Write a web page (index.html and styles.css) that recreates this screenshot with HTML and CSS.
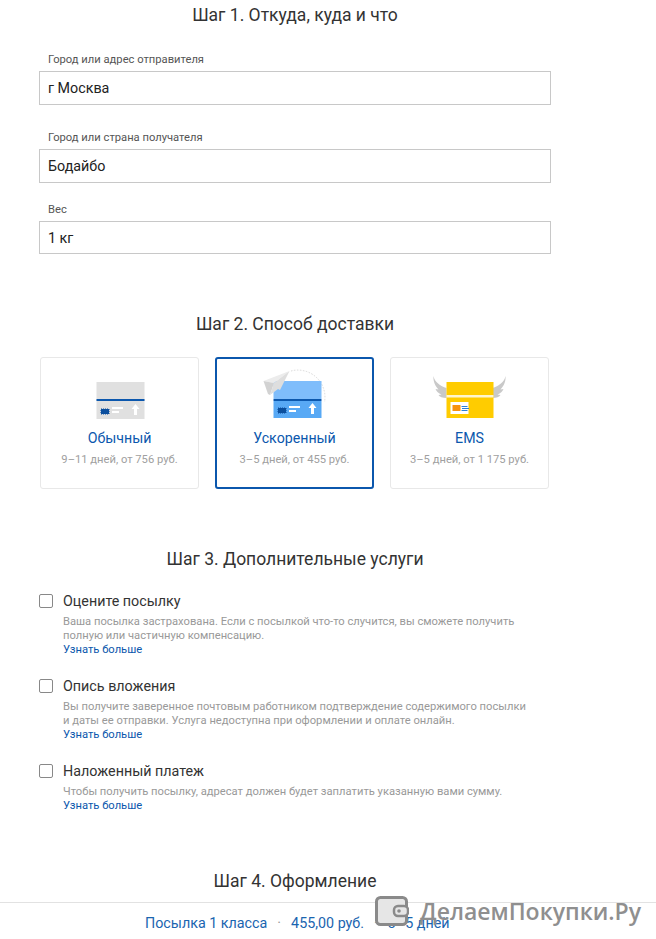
FILE: index.html
```html
<!DOCTYPE html>
<html lang="ru">
  <head>
    <meta charset="UTF-8" />
    <title>Шаг 1. Откуда, куда и что</title>
    <link rel="stylesheet" href="styles.css">
  </head>
  <body>
    <div class="page">
      <div class="content">
        <h2 class="step step-1">Шаг 1. Откуда, куда и что</h2>
        <label class="field field-from">
          <span class="field-label">Город или адрес отправителя</span>
          <span class="input">г Москва</span>
        </label>
        <label class="field field-to">
          <span class="field-label">Город или страна получателя</span>
          <span class="input">Бодайбо</span>
        </label>
        <label class="field field-weight">
          <span class="field-label">Вес</span>
          <span class="input">1 кг</span>
        </label>

        <h2 class="step step-2">Шаг 2. Способ доставки</h2>
        <div class="cards">
          <div class="card">
            <svg class="card-icon" width="80" height="50" viewBox="0 0 80 50">
              <rect x="16.500" y="12" width="48" height="37" fill="#e0e0e0" />
              <rect x="16.500" y="29" width="48" height="2" fill="#0b57ad" />
              <rect x="21" y="39" width="8" height="5" fill="#0b4f9e" stroke="#0b4f9e" stroke-dasharray="1 1" />
              <rect x="32" y="37" width="11" height="2" fill="#fff" />
              <rect x="32" y="41" width="7" height="2" fill="#fff" />
              <path d="M55.500 34l4 5h-2.500v6h-3v-6h-2.500z" fill="#fff" />
            </svg>
            <div class="card-name">Обычный</div>
            <div class="card-note">9–11 дней, от 756 руб.</div>
          </div>
          <div class="card card-active">
            <svg class="card-icon" width="80" height="50" viewBox="0 0 80 50">
              <path d="M36 1A27 27 0 0 1 69.500 32" fill="none" stroke="#d8d8d8" stroke-dasharray="1.500 1.500" />
              <rect x="18.500" y="11" width="48" height="18" fill="#7fbdfb" />
              <rect x="18.500" y="29" width="48" height="2" fill="#0b57ad" />
              <rect x="18.500" y="31" width="48" height="17" fill="#58a9f5" />
              <rect x="23" y="38" width="8" height="5" fill="#0b4f9e" stroke="#0b4f9e" stroke-dasharray="1 1" />
              <rect x="34" y="36" width="11" height="2" fill="#fff" />
              <rect x="34" y="40" width="7" height="2" fill="#fff" />
              <path d="M57.500 33l4 5H59v6h-3v-6h-2.500z" fill="#fff" />
              <path d="M8.500 11L34.500 1 19 13z" fill="#ececec" />
              <path d="M8.500 11L19 13 15 25 13 24z" fill="#d2d2d2" />
              <path d="M34.500 1L19 13l-4 12 8-6 2 1z" fill="#dedede" />
            </svg>
            <div class="card-name">Ускоренный</div>
            <div class="card-note">3–5 дней, от 455 руб.</div>
          </div>
          <div class="card">
            <svg class="card-icon" width="80" height="50" viewBox="0 0 80 50">
              <path d="M3.500 6c1 6 7 10 13 12v10c-4 0-7-1-8-3l3-.5c-3-1-5-3-6-5.500l3 .5C5 16 3 11 3.500 6z" fill="#c9c9c9" />
              <path d="M75.500 6c-1 6-7 10-13 12v10c4 0 7-1 8-3l-3-.5c3-1 5-3 6-5.500l-3 .5C74 16 76 11 75.500 6z" fill="#c9c9c9" />
              <rect x="16.500" y="12" width="47" height="36" fill="#ffcc00" />
              <rect x="16.500" y="25" width="47" height="2.500" fill="#fff6cf" />
              <rect x="20.500" y="32" width="18" height="12" fill="#fff" />
              <rect x="22.500" y="35" width="8" height="6" fill="#f7930f" />
              <path d="M31.500 36.500h6M32 38.500h7M31.500 40.500h6" fill="none" stroke="#2a7fd6" />
            </svg>
            <div class="card-name">EMS</div>
            <div class="card-note">3–5 дней, от 1 175 руб.</div>
          </div>
        </div>

        <h2 class="step step-3">Шаг 3. Дополнительные услуги</h2>
        <div class="option">
          <span class="checkbox"></span>
          <div class="option-body">
            <div class="option-name">Оцените посылку</div>
            <div class="option-text">Ваша посылка застрахована. Если с посылкой что-то случится, вы сможете получить<br />полную или частичную компенсацию.</div>
            <a class="more">Узнать больше</a>
          </div>
        </div>
        <div class="option">
          <span class="checkbox"></span>
          <div class="option-body">
            <div class="option-name">Опись вложения</div>
            <div class="option-text">Вы получите заверенное почтовым работником подтверждение содержимого посылки<br />и даты ее отправки. Услуга недоступна при оформлении и оплате онлайн.</div>
            <a class="more">Узнать больше</a>
          </div>
        </div>
        <div class="option">
          <span class="checkbox"></span>
          <div class="option-body">
            <div class="option-name">Наложенный платеж</div>
            <div class="option-text">Чтобы получить посылку, адресат должен будет заплатить указанную вами сумму.</div>
            <a class="more">Узнать больше</a>
          </div>
        </div>

        <h2 class="step step-4">Шаг 4. Оформление</h2>
      </div>

      <div class="summary">
        <span>Посылка 1 класса</span>
        <span class="dot">·</span>
        <span>455,00 руб.</span>
        <span class="dot">·</span>
        <span>3–5 дней</span>
      </div>

      <div class="watermark">
        <svg width="34" height="30" viewBox="0 0 34 30">
          <rect x="1.500" y="1.500" width="30" height="27" rx="4" fill="#e6e6e6" stroke="#8a8a8a" stroke-width="3" />
          <rect x="19" y="10" width="14" height="10" rx="4" fill="#e6e6e6" stroke="#8a8a8a" stroke-width="2.500" />
          <circle cx="24" cy="15" r="1.800" fill="#8a8a8a" />
        </svg>
        <span class="watermark-text">ДелаемПокупки.Ру</span>
      </div>
    </div>
  </body>
</html>
```

FILE: styles.css
```css
* {
  box-sizing: border-box;
}

body {
  margin: 0;
  background: #fff;
  font-family: Roboto, "Liberation Sans", sans-serif;
  color: #333;
}

.page {
  position: relative;
  height: 939px;
  overflow: hidden;
}

.content {
  width: 512px;
  margin-left: 39px;
}

.step {
  margin: 0;
  font-size: 17.500px;
  font-weight: 400;
  line-height: 24px;
  text-align: center;
  color: #333;
}

.step-1 {
  padding-top: 3px;
}

.step-2 {
  margin-top: 58px;
}

.step-3 {
  margin-top: 58px;
}

.step-4 {
  margin-top: 56px;
}

.field {
  display: block;
}

.field-from {
  margin-top: 26px;
}

.field-to {
  margin-top: 26px;
}

.field-weight {
  margin-top: 20px;
}

.field-label {
  display: block;
  padding-left: 9px;
  font-size: 11.200px;
  line-height: 14px;
  margin-bottom: 4px;
  color: #555;
}

.input {
  display: block;
  height: 34px;
  padding-left: 8px;
  border: 1px solid #c8c8c8;
  font-size: 14.300px;
  line-height: 32px;
  color: #222;
}

.field-weight .input {
  height: 33px;
}

.cards {
  display: flex;
  gap: 16px;
  margin: 21px 0 0 1px;
}

.card {
  width: 159px;
  height: 132px;
  padding-top: 12px;
  border: 1px solid #e8e8e8;
  border-radius: 3px;
  text-align: center;
}

.card-active {
  padding-top: 11px;
  border: 2px solid #0b57ad;
}

.card-icon {
  display: block;
  margin: 0 auto;
  overflow: visible;
}

.card-name {
  margin-top: 9px;
  font-size: 14.200px;
  line-height: 18px;
  color: #0b57ad;
}

.card-note {
  margin-top: 6px;
  font-size: 11.200px;
  line-height: 14px;
  color: #a0a0a0;
}

.option {
  display: flex;
  margin-top: 20px;
}

.step-3 + .option {
  margin-top: 21px;
}

.checkbox {
  flex: none;
  width: 14px;
  height: 14px;
  margin: 2px 10px 0 0;
  border: 1px solid #888;
  border-radius: 2px;
}

.option-name {
  font-size: 14.300px;
  line-height: 18px;
  color: #333;
}

.option-text {
  margin-top: 5px;
  font-size: 11.200px;
  line-height: 14px;
  color: #999;
}

.more {
  display: block;
  font-size: 11.200px;
  line-height: 14px;
  color: #0b57ad;
}

.summary {
  position: absolute;
  left: 0;
  right: 0;
  top: 902px;
  height: 37px;
  padding: 12px 0 0 145px;
  border-top: 1px solid #e2e2e2;
  font-size: 14.300px;
  line-height: 17px;
  color: #1a65b0;
  display: flex;
  gap: 10px;
}

.dot {
  color: #999;
}

.watermark {
  position: absolute;
  left: 375px;
  top: 896px;
  display: flex;
  align-items: center;
  gap: 11px;
}

.watermark-text {
  font-family: "Open Sans", "DejaVu Sans", sans-serif;
  font-weight: 600;
  font-size: 23px;
  line-height: 30px;
  color: #8f8f8f;
}
```
